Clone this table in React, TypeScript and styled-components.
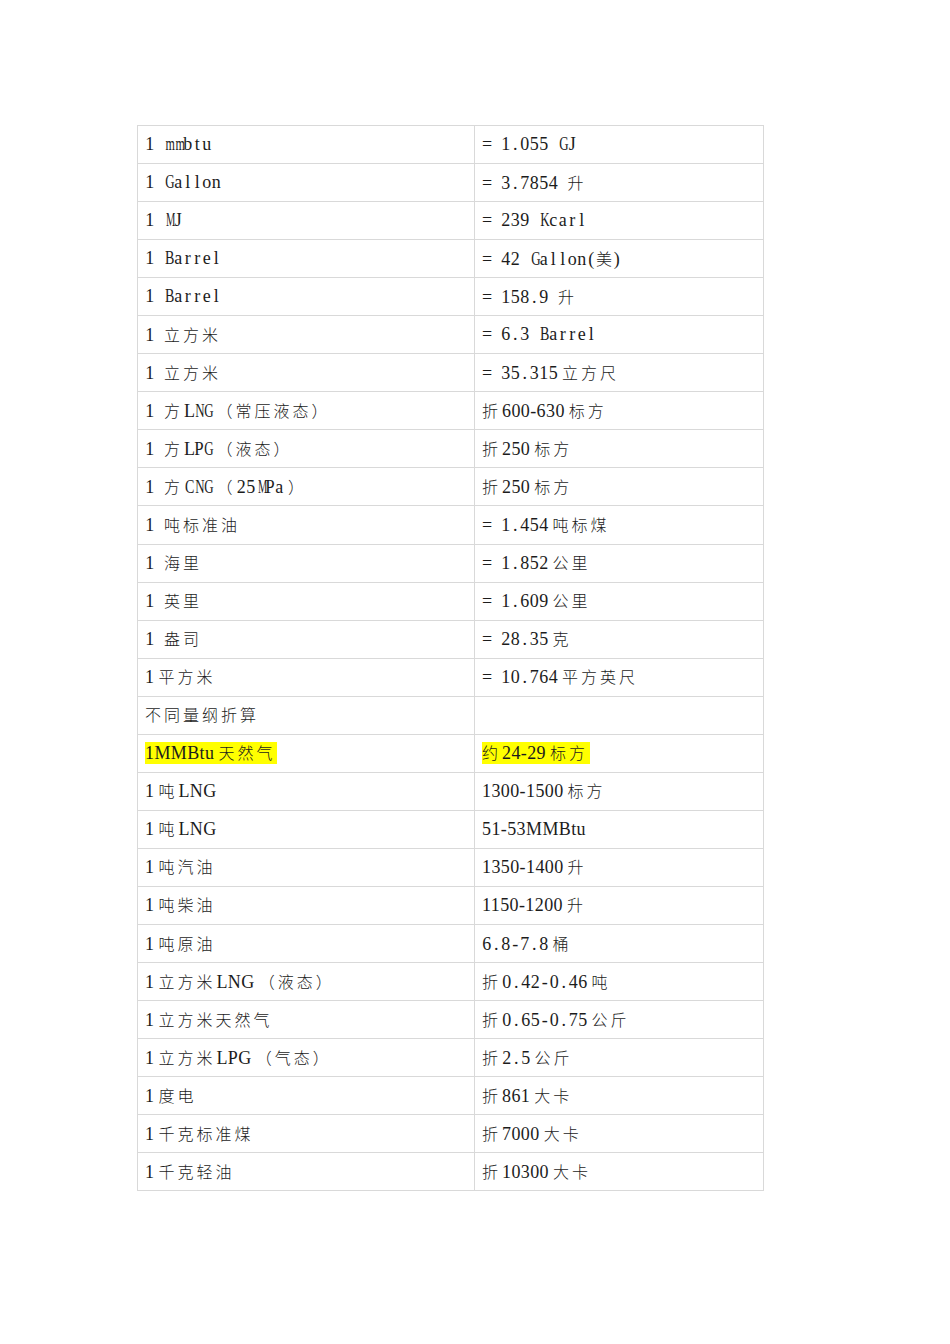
import React from "react";
import styled, { createGlobalStyle } from "styled-components";

const GlobalStyle = createGlobalStyle`
  body {
    margin: 0;
    background: #ffffff;
    color: #1c1c1c;
  }
`;

const Page = styled.div`
  width: 950px;
  min-height: 1344px;
  padding-top: 125px;
  box-sizing: border-box;
`;

const Table = styled.table`
  margin-left: 137px;
  width: 627px;
  border-collapse: collapse;
  table-layout: fixed;
`;

const Cell = styled.td<{ $left?: boolean }>`
  width: ${(p) => (p.$left ? "329px" : "auto")};
  height: 37.05px;
  padding: 0 0 0 7px;
  border: 1px solid #d9d9d9;
  vertical-align: middle;
  white-space: nowrap;
  line-height: 20px;
`;

const Serif = styled.span`
  font-family: "Liberation Serif", serif;
  font-size: 18px;
  letter-spacing: 0.4px;
`;

// one half-width cell of the fixed-pitch text
const MonoChar = styled.span`
  display: inline-block;
  width: 9.5px;
  text-align: center;
  font-family: "Liberation Serif", serif;
  font-size: 18px;
  white-space: pre;
`;

const Cjk = styled.span<{ $ml: number; $mr: number }>`
  font-family: "Noto Sans CJK SC", sans-serif;
  font-size: 16px;
  font-weight: 300;
  letter-spacing: 3px;
  margin-left: ${(p) => p.$ml}px;
  margin-right: ${(p) => p.$mr}px;
`;

const Mark = styled.span`
  background: #ffff00;
  display: inline-block;
  line-height: 20px;
  padding-right: 1px;
`;

type Row = [string, string, boolean, boolean];

// [left, right, left fixed-pitch, right fixed-pitch]
const rows: Row[] = [
  ["1 mmbtu", "= 1.055 GJ", true, true],
  ["1 Gallon", "= 3.7854 升", true, true],
  ["1 MJ", "= 239 Kcarl", true, true],
  ["1 Barrel", "= 42 Gallon(美)", true, true],
  ["1 Barrel", "= 158.9 升", true, true],
  ["1 立方米", "= 6.3 Barrel", true, true],
  ["1 立方米", "= 35.315立方尺", true, true],
  ["1 方LNG（常压液态）", "折600-630标方", true, false],
  ["1 方LPG（液态）", "折250标方", true, false],
  ["1 方CNG（25MPa）", "折250标方", true, false],
  ["1 吨标准油", "= 1.454吨标煤", true, true],
  ["1 海里", "= 1.852公里", true, true],
  ["1 英里", "= 1.609公里", true, true],
  ["1 盎司", "= 28.35克", true, true],
  ["1平方米", "= 10.764平方英尺", false, true],
  ["不同量纲折算", "", false, false],
  ["1MMBtu天然气", "约24-29标方", false, false],
  ["1吨LNG", "1300-1500标方", false, false],
  ["1吨LNG", "51-53MMBtu", false, false],
  ["1吨汽油", "1350-1400升", false, false],
  ["1吨柴油", "1150-1200升", false, false],
  ["1吨原油", "6.8-7.8桶", false, true],
  ["1立方米LNG（液态）", "折0.42-0.46吨", false, true],
  ["1立方米天然气", "折0.65-0.75公斤", false, true],
  ["1立方米LPG（气态）", "折2.5公斤", false, true],
  ["1度电", "折861大卡", false, false],
  ["1千克标准煤", "折7000大卡", false, false],
  ["1千克轻油", "折10300大卡", false, false],
];

// rough Times widths (em) of the wide letters, squeezed into one cell
const wide: Record<string, number> = {
  m: 0.778, w: 0.722, M: 0.889, W: 0.944, G: 0.722, K: 0.722,
  N: 0.722, B: 0.667, C: 0.667, D: 0.722, H: 0.722, P: 0.556,
};

const cjkRe = /([\u3000-\u9fff\uff00-\uffef]+)/;

function Text({ value, mono }: { value: string; mono: boolean }) {
  const parts = value.split(cjkRe).filter((s) => s.length > 0);
  return (
    <>
      {parts.map((part, i) => {
        if (cjkRe.test(part)) {
          const prev = parts[i - 1] ?? "";
          const next = parts[i + 1] ?? "";
          const ml = i === 0 || prev.endsWith("(") || prev.endsWith(" ") ? 0 : 4;
          const mr = next.startsWith(")") ? -3 : 1;
          return (
            <Cjk key={i} $ml={ml} $mr={mr}>
              {part}
            </Cjk>
          );
        }
        if (!mono) return <Serif key={i}>{part}</Serif>;
        return (
          <React.Fragment key={i}>
            {part.split("").map((ch, j) => {
              const w = wide[ch];
              const scale = w ? Math.min(1, 0.52 / w) : 1;
              return (
                <MonoChar
                  key={j}
                  style={scale < 1 ? { transform: `scaleX(${scale.toFixed(3)})` } : undefined}
                >
                  {ch}
                </MonoChar>
              );
            })}
          </React.Fragment>
        );
      })}
    </>
  );
}

export default function App() {
  return (
    <Page>
      <GlobalStyle />
      <Table>
        <tbody>
          {rows.map(([left, right, lm, rm], i) => {
            const marked = left.startsWith("1MMBtu");
            return (
              <tr key={i}>
                <Cell $left>
                  {marked ? (
                    <Mark>
                      <Text value={left} mono={lm} />
                    </Mark>
                  ) : (
                    <Text value={left} mono={lm} />
                  )}
                </Cell>
                <Cell>
                  {marked ? (
                    <Mark>
                      <Text value={right} mono={rm} />
                    </Mark>
                  ) : (
                    <Text value={right} mono={rm} />
                  )}
                </Cell>
              </tr>
            );
          })}
        </tbody>
      </Table>
    </Page>
  );
}
